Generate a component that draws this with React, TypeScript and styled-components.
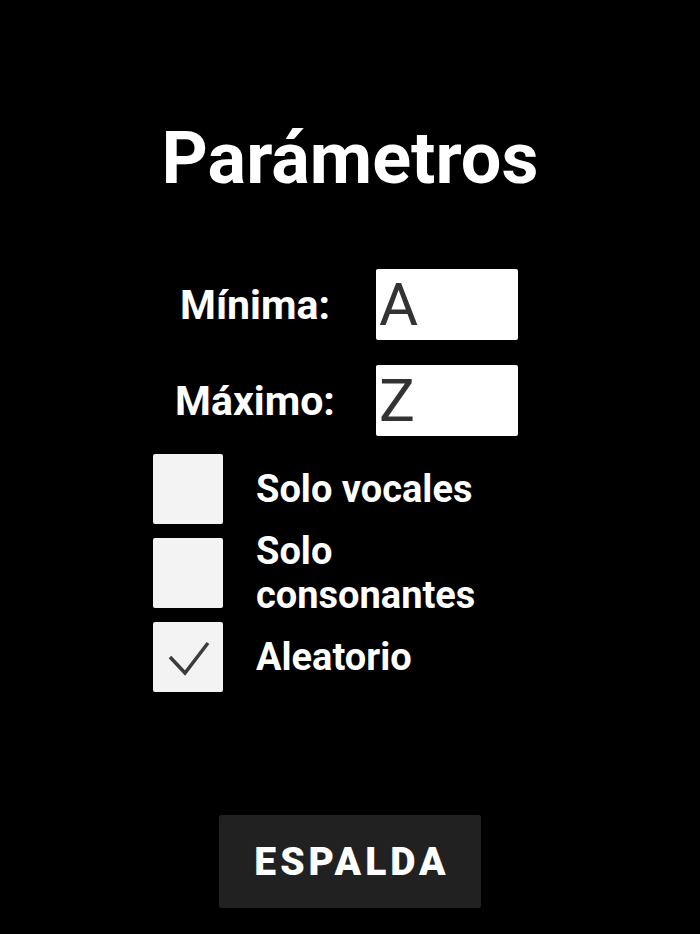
import styled, { createGlobalStyle } from "styled-components";

const GlobalStyle = createGlobalStyle`
    html, body {
        margin: 0;
        padding: 0;
        background: #000000;
    }
    body {
        font-family: Roboto, "Noto Sans", sans-serif;
    }
`

const Screen = styled.div`
    width: 700px;
    min-height: 934px;
    display: flex;
    flex-direction: column;
    align-items: center;
    background: #000000;
`

const Title = styled.h1`
    margin: 123px 0 0;
    font-size: 72px;
    line-height: 72px;
    font-weight: 700;
    color: #ffffff;
`

const Fields = styled.div`
    align-self: flex-start;
    margin: 74px 0 0 155px;
    display: grid;
    grid-template-columns: 200px 142px;
    column-gap: 21px;
    row-gap: 25px;
    align-items: center;
`

const FieldLabel = styled.label`
    text-align: center;
    font-size: 41px;
    line-height: 41px;
    font-weight: 700;
    color: #ffffff;
    padding-top: 2px;
`

const LetterInput = styled.input`
    box-sizing: border-box;
    width: 142px;
    height: 71px;
    margin: 0;
    padding: 0 0 0 3px;
    border: none;
    border-radius: 2px;
    background: #ffffff;
    color: #333333;
    font-family: Roboto, sans-serif;
    font-size: 60px;
    font-weight: 400;
    outline: none;
`

const Options = styled.div`
    align-self: flex-start;
    margin: 18px 0 0 153px;
    display: flex;
    flex-direction: column;
    gap: 14px;
`

const OptionRow = styled.label`
    height: 70px;
    display: flex;
    align-items: center;
    gap: 33px;
`

const Box = styled.span`
    flex: none;
    width: 70px;
    height: 70px;
    border-radius: 2px;
    background: #f3f3f3;
    display: flex;
    align-items: center;
    justify-content: center;
`

const OptionText = styled.span`
    width: 250px;
    font-size: 38px;
    line-height: 44px;
    font-weight: 700;
    color: #ffffff;
`

const BackButton = styled.button`
    margin-top: 123px;
    width: 262px;
    height: 93px;
    border: none;
    border-radius: 2px;
    background: #212121;
    color: #ffffff;
    font-family: Roboto, sans-serif;
    font-size: 39px;
    font-weight: 900;
    letter-spacing: 4px;
    padding: 0 0 0 4px;
`

const Check = () => (
    <svg width="70" height="70" viewBox="0 0 70 70">
        <path d="M17 35 L32 51 L55 21" fill="none" stroke="#3c3c3c" strokeWidth="3.5" />
    </svg>
)

const Option = ({ text, checked }: { text: string, checked?: boolean }) => (
    <OptionRow>
        <Box>{checked && <Check />}</Box>
        <OptionText>{text}</OptionText>
    </OptionRow>
)

export default function App() {
    return (
        <Screen>
            <GlobalStyle />
            <Title>Parámetros</Title>
            <Fields>
                <FieldLabel>Mínima:</FieldLabel>
                <LetterInput defaultValue="A" />
                <FieldLabel>Máximo:</FieldLabel>
                <LetterInput defaultValue="Z" />
            </Fields>
            <Options>
                <Option text="Solo vocales" />
                <Option text="Solo consonantes" />
                <Option text="Aleatorio" checked />
            </Options>
            <BackButton>ESPALDA</BackButton>
        </Screen>
    )
}
